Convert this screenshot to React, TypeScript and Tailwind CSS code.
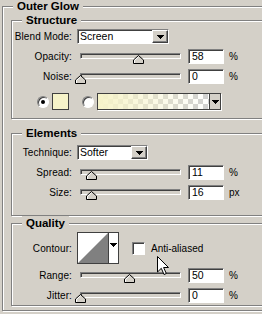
import React from "react";

const sunken =
  "border border-t-[#808080] border-l-[#808080] border-b-white border-r-white shadow-[inset_1px_1px_0_#404040]";
const raised =
  "border border-t-white border-l-white border-b-[#404040] border-r-[#404040] shadow-[inset_-1px_-1px_0_#808080]";

function Group({ title, className, children }: { title: string; className?: string; children: React.ReactNode }) {
  return (
    <div className={"relative border border-[#808080] shadow-[inset_1px_1px_0_#fff,1px_1px_0_#fff] " + (className ?? "")}>
      <span className="absolute left-[10px] -top-[8px] bg-[#d4d0c8] px-[4px] text-[11.5px] leading-[14px] font-bold">
        {title}
      </span>
      {children}
    </div>
  );
}

function Arrow() {
  return (
    <svg width="7" height="4" viewBox="0 0 7 4" shapeRendering="crispEdges">
      <path d="M0 0 H7 L3.5 4 Z" fill="#000" />
    </svg>
  );
}

function DropButton({ className }: { className?: string }) {
  return (
    <div className={"flex items-center justify-center bg-[#d4d0c8] " + raised + " " + (className ?? "")}>
      <Arrow />
    </div>
  );
}

function Label({ children }: { children: React.ReactNode }) {
  return <div className="w-[60px] shrink-0 text-right tracking-[0.1px]">{children}</div>;
}

function Select({ value, width }: { value: string; width: string }) {
  return (
    <div className={"ml-[5px] flex h-[15px] items-stretch bg-white " + sunken + " " + width}>
      <span className="flex-1 pl-[2px] text-[10.5px] leading-[13px]">{value}</span>
      <DropButton className="w-[16px]" />
    </div>
  );
}

function Thumb() {
  return (
    <svg width="11" height="9" viewBox="0 0 11 9">
      <path d="M5.5 0.5 L10.5 5 V8.5 H0.5 V5 Z" fill="#d4d0c8" stroke="#000" />
      <path d="M1.5 8 V5.4 L5.5 1.8" fill="none" stroke="#fff" />
    </svg>
  );
}

function SliderRow({ label, value, pos, unit }: { label: string; value: string; pos: number; unit: string }) {
  return (
    <div className="flex h-[15px] items-center">
      <Label>{label}</Label>
      <div className="relative ml-[5px] h-[15px] w-[108px]">
        <div className={"ml-[3px] mt-[4px] h-[6px] w-[101px] bg-[#d4d0c8] " + sunken} />
        <div className="absolute top-[6px]" style={{ left: 3 + pos - 5 }}>
          <Thumb />
        </div>
      </div>
      <div className={"ml-[3px] h-[15px] w-[36px] bg-white pl-[3px] text-[10.5px] leading-[13px] " + sunken}>{value}</div>
      <span className="ml-[5px]">{unit}</span>
    </div>
  );
}

function Radio({ checked }: { checked?: boolean }) {
  return (
    <div className="flex h-[12px] w-[12px] items-center justify-center rounded-full border border-t-[#808080] border-l-[#808080] border-b-white border-r-white bg-white shadow-[inset_1px_1px_0_#404040]">
      {checked && <div className="h-[4px] w-[4px] rounded-full bg-black" />}
    </div>
  );
}

export default function App() {
  return (
    <div className="relative h-[314px] w-[262px] overflow-hidden bg-[#d4d0c8] pl-[2px] pt-[6px] font-['Liberation_Sans',Arial,sans-serif] text-[10px] text-black">
      <Group title="Outer Glow" className="h-[305px] w-[300px]">
        <div className="ml-[8px] mt-[13px] flex flex-col">
          <Group title="Structure" className="h-[99px] w-[280px]">
            <div className="mt-[8px] flex h-[15px] items-center">
              <Label>Blend Mode:</Label>
              <Select value="Screen" width="w-[92px]" />
            </div>
            <div className="mt-[5px]">
              <SliderRow label="Opacity:" value="58" pos={58} unit="%" />
            </div>
            <div className="mt-[5px]">
              <SliderRow label="Noise:" value="0" pos={0} unit="%" />
            </div>
            <div className="mt-[9px] flex h-[17px] items-center">
              <div className="ml-[25px]">
                <Radio checked />
              </div>
              <div className="ml-[3px] h-[17px] w-[17px] border border-[#404040] bg-[#f6f3c9]" />
              <div className="ml-[13px]">
                <Radio />
              </div>
              <div className="ml-[3px] flex h-[17px] w-[124px] border border-[#404040] shadow-[1px_1px_0_#fff]">
                <div className="flex-1 bg-[linear-gradient(to_right,#f6f3c9,#f6f3c900),conic-gradient(#d0d0d0_25%,#fff_0_50%,#d0d0d0_0_75%,#fff_0)] bg-[length:100%_100%,10px_10px]" />
                <div className="flex w-[11px] items-center justify-center border-l border-[#404040] bg-[#d4d0c8]">
                  <Arrow />
                </div>
              </div>
            </div>
          </Group>

          <Group title="Elements" className="mt-[14px] h-[83px] w-[280px]">
            <div className="mt-[11px] flex h-[15px] items-center">
              <Label>Technique:</Label>
              <Select value="Softer" width="w-[71px]" />
            </div>
            <div className="mt-[5px]">
              <SliderRow label="Spread:" value="11" pos={11} unit="%" />
            </div>
            <div className="mt-[5px]">
              <SliderRow label="Size:" value="16" pos={11} unit="px" />
            </div>
          </Group>

          <Group title="Quality" className="mt-[7px] h-[83px] w-[280px]">
            <div className="mt-[8px] flex h-[32px] items-center">
              <Label>Contour:</Label>
              <div className="ml-[5px] flex h-[32px] w-[42px] border border-[#404040] bg-white">
                <svg width="30" height="30" viewBox="0 0 30 30" className="shrink-0">
                  <rect width="30" height="30" fill="#fff" />
                  <path d="M0 30 L30 0 V30 Z" fill="#808080" />
                </svg>
                <div className="flex flex-1 justify-center border-l border-[#404040] pt-[10px]">
                  <Arrow />
                </div>
              </div>
              <div className={"ml-[13px] h-[13px] w-[13px] bg-white " + sunken} />
              <span className="ml-[6px]">Anti-aliased</span>
            </div>
            <div className="mt-[4px]">
              <SliderRow label="Range:" value="50" pos={49} unit="%" />
            </div>
            <div className="mt-[5px]">
              <SliderRow label="Jitter:" value="0" pos={0} unit="%" />
            </div>
          </Group>
        </div>
      </Group>

      <svg className="absolute left-[157px] top-[256px]" width="13" height="20" viewBox="0 0 13 20">
        <path d="M0.5 0.5 V16 L4.3 12.3 L7 18.5 L9.3 17.5 L6.6 11.5 H11.5 Z" fill="#fff" stroke="#000" />
      </svg>
    </div>
  );
}
